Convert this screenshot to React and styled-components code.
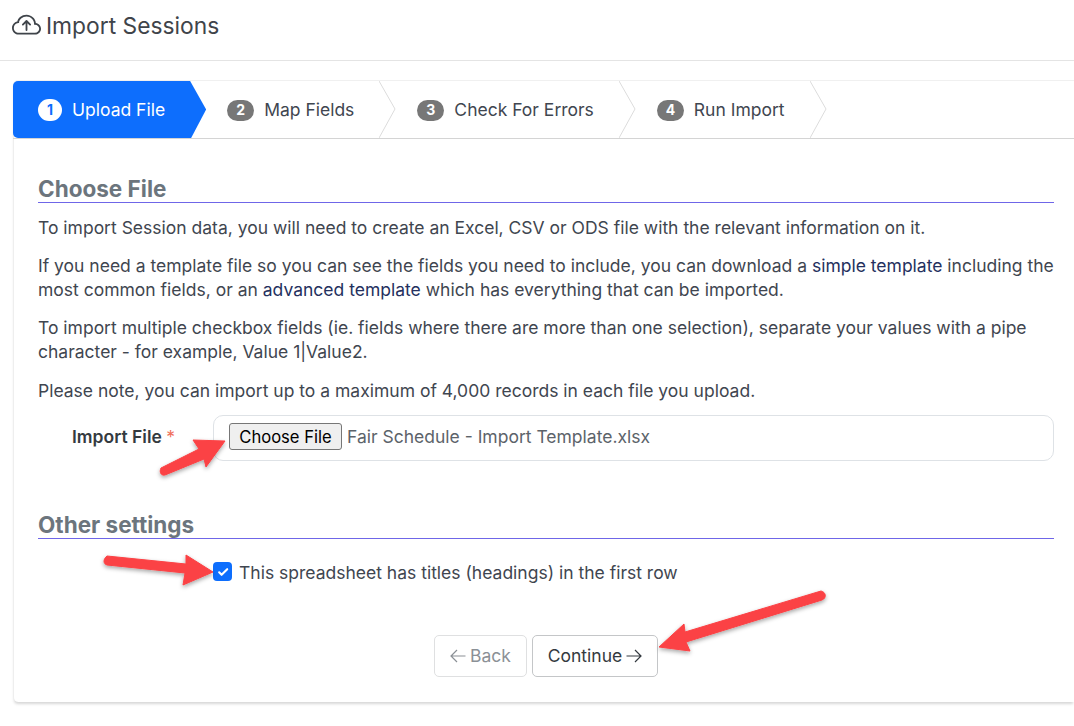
import React from "react";
import styled, { createGlobalStyle } from "styled-components";

const Global = createGlobalStyle`
  html, body { margin: 0; padding: 0; background: #fff; overflow: hidden; }
  body { font-family: Inter, "Liberation Sans", sans-serif; color: #343a40; font-size: 17.5px; }
`;

const Page = styled.div`
  position: relative;
  width: 1074px;
  height: 726px;
  overflow: hidden;
`;

const Header = styled.header`
  height: 60px;
  border-bottom: 1px solid #e4e4e4;
  display: flex;
  align-items: center;
  padding: 0 12px;
  gap: 5px;
  margin-bottom: 19px;
`;

const PageTitle = styled.h1`
  margin: 0 0 9px;
  font-size: 22.8px;
  font-weight: 400;
  color: #3f444a;
  line-height: 30px;
`;

const CloudIcon = styled.svg`
  width: 29px;
  height: 29px;
  margin-bottom: 10px;
  color: #3f444a;
`;

const Card = styled.main`
  margin-left: 13px;
  height: 622px;
  box-sizing: border-box;
  border-left: 1px solid #eee;
  border-top: 1px solid #f0f0f0;
  border-radius: 5px 0 0 5px;
  box-shadow: 0 3px 3px -1px rgba(0, 0, 0, 0.16);
  background: #fff;
`;

const Steps = styled.nav`
  display: flex;
  height: 58px;
  margin-left: -1px;
  border-bottom: 1px solid #d4d4d4;
  box-sizing: border-box;
`;

const Step = styled.div`
  position: relative;
  display: flex;
  align-items: center;
  height: 57px;
  box-sizing: border-box;
  padding: 1px ${(p) => (p.$active ? "41px" : "42px")} 0 ${(p) => (p.$active ? "25px" : "21px")};
  color: ${(p) => (p.$active ? "#fff" : "#3f4650")};
  background: ${(p) => (p.$active ? "#0d6efd" : "transparent")};
  border-radius: ${(p) => (p.$active ? "5px 0 0 5px" : "0")};
  clip-path: ${(p) =>
    p.$active
      ? "polygon(0 0, calc(100% - 16px) 0, 100% 50%, calc(100% - 15px) 100%, 0 100%)"
      : "none"};
  font-size: 17.5px;
  line-height: 24px;
`;

const Badge = styled.span`
  display: inline-flex;
  align-items: center;
  justify-content: center;
  width: ${(p) => (p.$active ? "24px" : "27px")};
  height: ${(p) => (p.$active ? "22px" : "21px")};
  margin-right: 10px;
  border-radius: 12px;
  background: ${(p) => (p.$active ? "#fff" : "#777")};
  color: ${(p) => (p.$active ? "#0d6efd" : "#fff")};
  font-size: 14px;
  font-weight: 700;
`;

const Chevron = styled.svg`
  position: absolute;
  top: 0;
  right: 0;
  width: 17px;
  height: 57px;
`;

const Body = styled.div`
  padding: 38px 20px 0 24px;
`;

const SectionTitle = styled.h2`
  margin: 0 0 13px;
  font-size: 22.5px;
  line-height: 24px;
  font-weight: 700;
  color: #6c757d;
  border-bottom: 1px solid #6f66e8;
  height: 25px;
`;

const Para = styled.p`
  margin: 0 0 14.2px;
  font-size: 17.5px;
  line-height: 24px;
  color: #3f4650;
`;

const Link = styled.a`
  color: #24305e;
`;

const FormRow = styled.div`
  display: flex;
  align-items: center;
  margin-top: -2px;
`;

const Label = styled.label`
  width: 175px;
  box-sizing: border-box;
  padding: 0 0 2px 34px;
  font-weight: 600;
  font-size: 17.5px;
  color: #343a40;
`;

const Required = styled.span`
  color: #f0705c;
  font-weight: 400;
`;

const FileBox = styled.div`
  flex: 1;
  height: 46px;
  box-sizing: border-box;
  display: flex;
  align-items: center;
  padding: 0 0 2px 15px;
  gap: 5px;
  border: 1px solid #dee2e6;
  border-radius: 10px;
  font-size: 17.5px;
  color: #5c636a;
`;

const FileButton = styled.span`
  display: inline-flex;
  align-items: center;
  justify-content: center;
  width: 113px;
  height: 27px;
  box-sizing: border-box;
  background: #efefef;
  border: 1px solid #767676;
  border-radius: 3px;
  color: #000;
  font-size: 16.6px;
`;

const OtherTitle = styled(SectionTitle)`
  margin-top: 52px;
  margin-bottom: 22px;
`;

const CheckRow = styled.div`
  display: flex;
  align-items: center;
  gap: 7px;
  padding-left: 175px;
  height: 24px;
  color: #3f4650;
`;

const CheckBox = styled.span`
  display: inline-flex;
  align-items: center;
  justify-content: center;
  width: 19px;
  height: 19px;
  margin-top: -2px;
  border-radius: 4px;
  background: #0d6efd;
`;

const Actions = styled.div`
  display: flex;
  justify-content: center;
  gap: 5px;
  margin-top: 50px;
`;

const Button = styled.button`
  display: inline-flex;
  align-items: center;
  justify-content: center;
  gap: 4px;
  height: 42px;
  padding: 0;
  width: ${(p) => p.$width};
  background: #fff;
  border: 1px solid ${(p) => (p.disabled ? "#dfe0e1" : "#c4c6c8")};
  border-radius: 5px;
  font: 400 17.5px Inter, "Liberation Sans", sans-serif;
  color: ${(p) => (p.disabled ? "#8b9096" : "#343a40")};
`;

const ArrowLayer = styled.svg`
  position: absolute;
  left: 0;
  top: 0;
  width: 1074px;
  height: 726px;
  pointer-events: none;
`;

const Arrow = ({ d }) => <path d={d} fill="#fb4245" stroke="#fb4245" strokeLinejoin="round" strokeWidth="1" filter="url(#arrowShadow)" />;

const steps = ["Upload File", "Map Fields", "Check For Errors", "Run Import"];

export default function App() {
  return (
    <Page>
      <Global />
      <Header>
        <CloudIcon viewBox="0 0 16 16" fill="currentColor">
          <path fillRule="evenodd" d="M7.646 5.146a.5.5 0 0 1 .708 0l2 2a.5.5 0 0 1-.708.708L8.5 6.707V10.5a.5.5 0 0 1-1 0V6.707L6.354 7.854a.5.5 0 1 1-.708-.708l2-2z" />
          <path d="M4.406 3.342A5.53 5.53 0 0 1 8 2c2.69 0 4.923 2 5.166 4.579C14.758 6.804 16 8.137 16 9.773 16 11.569 14.502 13 12.687 13H3.781C1.708 13 0 11.366 0 9.318c0-1.763 1.266-3.223 2.942-3.593.143-.863.698-1.723 1.464-2.383zm.653.757c-.757.653-1.153 1.44-1.153 2.056v.448l-.445.049C2.064 6.805 1 7.952 1 9.318 1 10.785 2.23 12 3.781 12h8.906C13.98 12 15 10.988 15 9.773c0-1.216-1.02-2.228-2.313-2.228h-.5v-.5C12.188 4.825 10.328 3 8 3a4.53 4.53 0 0 0-2.941 1.1z" />
        </CloudIcon>
        <PageTitle>Import Sessions</PageTitle>
      </Header>
      <Card>
        <Steps>
          {steps.map((label, i) => (
            <Step key={label} $active={i === 0}>
              <Badge $active={i === 0}>{i + 1}</Badge>
              {label}
              {i > 0 && (
                <Chevron viewBox="0 0 17 57">
                  <polyline points="0,0 16,28 0,57" fill="none" stroke="#dcdcdc" />
                </Chevron>
              )}
            </Step>
          ))}
        </Steps>
        <Body>
          <SectionTitle>Choose File</SectionTitle>
          <Para>To import Session data, you will need to create an Excel, CSV or ODS file with the relevant information on it.</Para>
          <Para>
            If you need a template file so you can see the fields you need to include, you can download a <Link>simple template</Link> including the most common fields, or an <Link>advanced template</Link> which has everything that can be imported.
          </Para>
          <Para>To import multiple checkbox fields (ie. fields where there are more than one selection), separate your values with a pipe character - for example, Value 1|Value2.</Para>
          <Para>Please note, you can import up to a maximum of 4,000 records in each file you upload.</Para>
          <FormRow>
            <Label>
              Import File <Required>*</Required>
            </Label>
            <FileBox>
              <FileButton>Choose File</FileButton>
              Fair Schedule - Import Template.xlsx
            </FileBox>
          </FormRow>
          <OtherTitle>Other settings</OtherTitle>
          <CheckRow>
            <CheckBox>
              <svg width="14" height="14" viewBox="0 0 20 20">
                <path d="M4.5 10.5l3.5 3.5 8-8" fill="none" stroke="#fff" strokeWidth="3" strokeLinecap="round" strokeLinejoin="round" />
              </svg>
            </CheckBox>
            This spreadsheet has titles (headings) in the first row
          </CheckRow>
          <Actions>
            <Button disabled $width="93px">
              <svg width="16" height="14" viewBox="0 0 16 14" fill="none" stroke="currentColor" strokeWidth="1.2">
                <path d="M15.5 7H1 M7 1L1 7l6 6" />
              </svg>
              Back
            </Button>
            <Button $width="126px">
              Continue
              <svg width="16" height="14" viewBox="0 0 16 14" fill="none" stroke="currentColor" strokeWidth="1.2">
                <path d="M0.5 7H15 M9 1l6 6-6 6" />
              </svg>
            </Button>
          </Actions>
        </Body>
      </Card>
      <ArrowLayer viewBox="0 0 1074 726">
        <defs>
          <filter id="arrowShadow" x="-20%" y="-40%" width="140%" height="180%">
            <feDropShadow dx="0" dy="2" stdDeviation="2" floodColor="#000" floodOpacity="0.35" />
          </filter>
        </defs>
        <Arrow d="M161 468 C159 472 161 476 165 475 L204 459 L206 467 L225 441 L193 440 L199 449 Z" />
        <Arrow d="M107 556 C103 559 103 564 107 565 L185 573 L183 585 L213 572 L186 555 L186 564 Z" />
        <Arrow d="M821 591 C826 592 827 598 822 600 L686 642 L690 651 L659 647 L684 624 L685 632 Z" />
      </ArrowLayer>
    </Page>
  );
}
